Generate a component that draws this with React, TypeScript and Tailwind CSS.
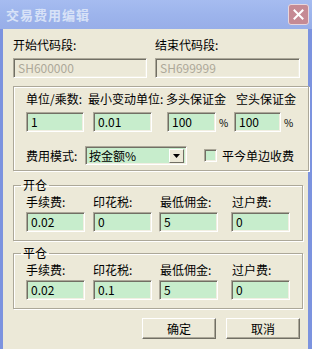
import React from 'react'

const font = { fontFamily: '"Noto Sans CJK SC", "Liberation Sans", sans-serif' }

const sunken =
  'border border-t-[#ACA899] border-l-[#ACA899] border-b-white border-r-white shadow-[inset_1px_1px_0_#716F64,inset_-1px_-1px_0_#F1EFE2]'

const Field = ({ value, className = '', disabled = false }: { value: string; className?: string; disabled?: boolean }) => (
  <div
    className={`h-[20px] flex items-center pl-[4px] text-[12px] leading-none ${sunken} ${
      disabled ? 'bg-[#ECE9D8] text-[#ACA899]' : 'bg-[#C7EDCC] text-black'
    } ${className}`}
  >
    {value}
  </div>
)

const Group = ({ title, children, className = '' }: { title?: string; children: React.ReactNode; className?: string }) => (
  <fieldset
    className={`border border-[#ACA899] shadow-[inset_1px_1px_0_#fff,1px_1px_0_#fff] px-[12px] ${className}`}
  >
    {title && <legend className="ml-[-5px] px-[2px] text-[12px] leading-[14px]">{title}</legend>}
    {children}
  </fieldset>
)

const FeeRows = ({ values }: { values: string[] }) => (
  <>
    <div className="grid grid-cols-[67px_67px_70px_60px] text-[12px] leading-[14px] mt-[3px]">
      <span>手续费:</span>
      <span>印花税:</span>
      <span>最低佣金:</span>
      <span className="ml-[2px]">过户费:</span>
    </div>
    <div className="flex mt-[3px] mb-[8px]">
      <Field value={values[0]} className="w-[59px]" />
      <Field value={values[1]} className="w-[59px] ml-[8px]" />
      <Field value={values[2]} className="w-[59px] ml-[7px]" />
      <Field value={values[3]} className="w-[59px] ml-[13px]" />
    </div>
  </>
)

const Button = ({ label }: { label: string }) => (
  <button className="w-[74px] h-[21px] bg-[#ECE9D8] border border-t-white border-l-white border-b-[#716F64] border-r-[#716F64] shadow-[inset_-1px_-1px_0_#ACA899] text-[12px] leading-none">
    {label}
  </button>
)

export default function App() {
  return (
    <div className="w-[312px] h-[349px] overflow-hidden flex flex-col bg-[#7C93DF] text-black" style={font}>
      {/* title bar */}
      <div className="h-[29px] flex items-center justify-between pl-[6px] pr-[3px] bg-gradient-to-b from-[#A6BCF0] via-[#9DB4EC] to-[#98AEE8]">
        <span className="text-[13px] font-bold text-[#D8E2F7] tracking-[1px]">交易费用编辑</span>
        <div className="w-[21px] h-[21px] rounded-[3px] border border-[#E8D6DC] bg-[#C58A94] flex items-center justify-center">
          <svg width="11" height="11" viewBox="0 0 11 11">
            <path d="M1.5 1.5 L9.5 9.5 M9.5 1.5 L1.5 9.5" stroke="#fff" strokeWidth="2" strokeLinecap="square" />
          </svg>
        </div>
      </div>

      {/* body */}
      <div className="flex-1 ml-[3px] mr-[4px] bg-[#ECE9D8] pl-[10px] pr-[8px] pt-[9px]">
        <div className="flex">
          <div className="w-[134px]">
            <div className="text-[12px] leading-[14px]">开始代码段:</div>
            <Field value="SH600000" disabled className="mt-[6px] w-[134px]" />
          </div>
          <div className="ml-[8px] w-[145px]">
            <div className="text-[12px] leading-[14px]">结束代码段:</div>
            <Field value="SH699999" disabled className="mt-[6px] w-[145px]" />
          </div>
        </div>

        <Group className="mt-[8px] h-[85px]">
          <div className="flex text-[12px] leading-[14px] mt-[5px] whitespace-nowrap">
            <span className="w-[62px]">单位/乘数:</span>
            <span className="w-[78px]">最小变动单位:</span>
            <span className="w-[70px]">多头保证金</span>
            <span>空头保证金</span>
          </div>
          <div className="flex items-center mt-[6px]">
            <Field value="1" className="w-[58px] h-[18px]" />
            <Field value="0.01" className="w-[59px] h-[18px] ml-[9px]" />
            <Field value="100" className="w-[49px] h-[18px] ml-[15px]" />
            <span className="text-[10px] ml-[3px] w-[15px]">%</span>
            <Field value="100" className="w-[47px] h-[18px]" />
            <span className="text-[10px] ml-[3px]">%</span>
          </div>
          <div className="flex items-center mt-[14px] text-[12px]">
            <span className="w-[59px]">费用模式:</span>
            <div className={`w-[102px] h-[19px] bg-[#C7EDCC] flex items-center justify-between pl-[3px] pr-[2px] ${sunken}`}>
              <span>按金额%</span>
              <div className="w-[15px] h-[14px] bg-[#ECE9D8] border border-t-white border-l-white border-b-[#716F64] border-r-[#716F64] flex items-center justify-center">
                <svg width="7" height="4" viewBox="0 0 7 4">
                  <path d="M0 0 H7 L3.5 4 Z" fill="#000" />
                </svg>
              </div>
            </div>
            <div className={`w-[13px] h-[13px] ml-[17px] bg-[#C7EDCC] ${sunken}`} />
            <span className="ml-[5px]">平今单边收费</span>
          </div>
        </Group>

        <Group title="开仓" className="mt-[7px]">
          <FeeRows values={['0.02', '0', '5', '0']} />
        </Group>

        <Group title="平仓" className="mt-[5px]">
          <FeeRows values={['0.02', '0.1', '5', '0']} />
        </Group>

        <div className="flex justify-end gap-[10px] mt-[9px]">
          <Button label="确定" />
          <Button label="取消" />
        </div>
      </div>
    </div>
  )
}
